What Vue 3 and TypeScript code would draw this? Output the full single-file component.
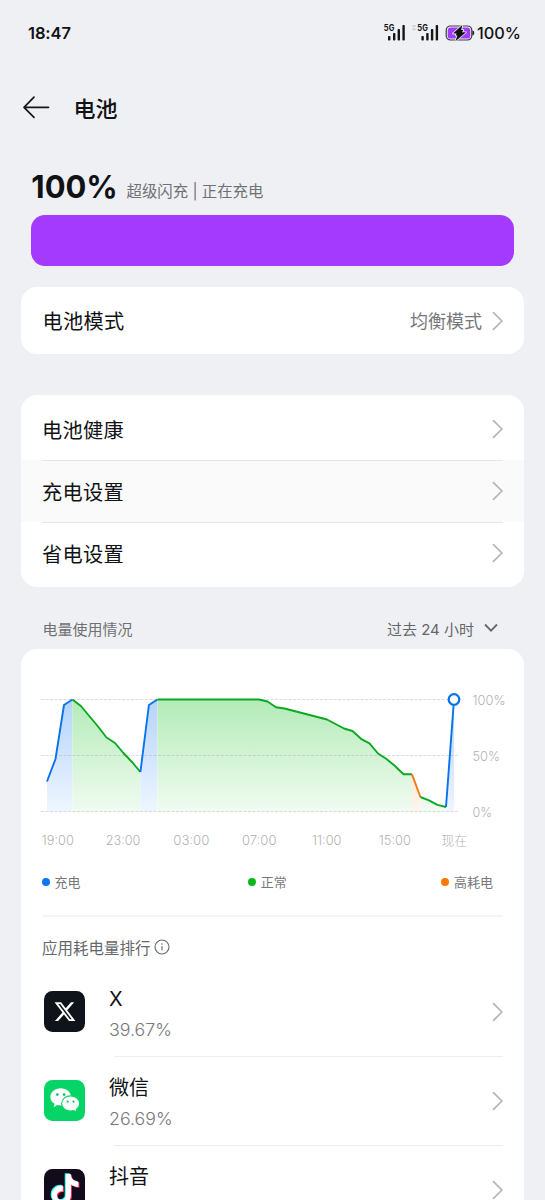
<script setup lang="ts">
type Kind = 'charge' | 'normal' | 'high'
type Point = [number, number]

interface Segment {
  kind: Kind
  points: Point[]
}

const BASE = 811.5

const segments: Segment[] = [
  { kind: 'charge', points: [[47, 781.5], [55.5, 759], [64, 705], [72.4, 699.5]] },
  {
    kind: 'normal',
    points: [[72.4, 699.5], [80.9, 706], [98, 726.5], [106.5, 737.5], [115, 743], [123.4, 753], [132, 762], [140.4, 772]],
  },
  { kind: 'charge', points: [[140.4, 772], [148.9, 705], [157.4, 699.5]] },
  {
    kind: 'normal',
    points: [
      [157.4, 699.5], [259, 699.5], [267.5, 701.5], [276, 707.2], [284.5, 708.5], [327, 719.5], [344, 728.5],
      [352.5, 731], [361, 738.8], [369.5, 743.3], [378, 753.5], [386.5, 759], [395, 766], [403.5, 774.3], [412, 774.3],
    ],
  },
  { kind: 'high', points: [[412, 774.3], [420.4, 797]] },
  { kind: 'normal', points: [[420.4, 797], [429, 800.3], [437.4, 804.8], [446, 807]] },
  { kind: 'charge', points: [[446, 807], [454, 699.5]] },
]

const line = (s: Segment): string => s.points.map((p) => p.join(',')).join(' ')
const area = (s: Segment): string => {
  const first = s.points[0]
  const last = s.points[s.points.length - 1]
  return `${first[0]},${BASE} ${line(s)} ${last[0]},${BASE}`
}

const times = [
  { t: '19:00', x: 41.8, w: 32 },
  { t: '23:00', x: 105.8, w: 34.5 },
  { t: '03:00', x: 173.3, w: 36 },
  { t: '07:00', x: 242, w: 34.5 },
  { t: '11:00', x: 312, w: 29.5 },
  { t: '15:00', x: 378.8, w: 32 },
  { t: '现在', x: 441.5, w: 25.5 },
]

const levels = [
  { t: '100%', y: 699.5, w: 33 },
  { t: '50%', y: 755.5, w: 27.5 },
  { t: '0%', y: 811.5, w: 19.5 },
]

const settings = ['电池健康', '充电设置', '省电设置']

const apps = [
  { id: 'x', name: 'X', share: '39.67%' },
  { id: 'wechat', name: '微信', share: '26.69%' },
  { id: 'douyin', name: '抖音', share: '' },
]

const note =
  'M12.525.02c1.31-.02 2.61-.01 3.91-.02.08 1.53.63 3.09 1.75 4.17 1.12 1.11 2.7 1.62 4.24 1.79v4.03c-1.44-.05-2.89-.35-4.2-.97-.57-.26-1.1-.59-1.62-.93-.01 2.92.01 5.84-.02 8.75-.08 1.4-.54 2.79-1.35 3.94-1.31 1.92-3.58 3.17-5.91 3.21-1.43.08-2.86-.31-4.08-1.03-2.02-1.19-3.44-3.37-3.65-5.71-.02-.5-.03-1-.01-1.49.18-1.9 1.12-3.72 2.58-4.96 1.66-1.44 3.98-2.13 6.15-1.72.02 1.48-.04 2.96-.04 4.44-.99-.32-2.15-.23-3.02.37-.63.41-1.11 1.04-1.36 1.75-.21.51-.15 1.07-.14 1.61.24 1.64 1.82 3.02 3.5 2.87 1.12-.01 2.19-.66 2.77-1.61.19-.33.4-.67.41-1.06.1-1.79.06-3.57.07-5.36.01-4.03-.01-8.05.02-12.07z'
</script>

<template>
  <div class="screen">
    <div class="status">
      <span class="clock">18:47</span>
      <svg class="status-icons" width="92" height="20" viewBox="383 23 92 20">
        <g class="ink">
          <rect x="388" y="36" width="2.4" height="4.5" rx=".8" />
          <rect x="393" y="33" width="2.4" height="7.5" rx=".8" />
          <rect x="397.6" y="29" width="2.4" height="11.5" rx=".8" />
          <rect x="402.4" y="25" width="2.4" height="15.5" rx=".8" />
          <rect x="421.4" y="36" width="2.4" height="4.5" rx=".8" />
          <rect x="426.2" y="33" width="2.4" height="7.5" rx=".8" />
          <rect x="430.9" y="29" width="2.4" height="11.5" rx=".8" />
          <rect x="435.7" y="25" width="2.4" height="15.5" rx=".8" />
        </g>
        <text class="net" x="383.800" y="31.200" textLength="10.500" lengthAdjust="spacingAndGlyphs">5G</text>
        <text class="net" x="417.300" y="31.200" textLength="10.500" lengthAdjust="spacingAndGlyphs">5G</text>
        <rect x="412.300" y="25" width="3.400" height="2" fill="#d2d3d5" />
        <rect x="412.300" y="28.200" width="3.400" height="2" fill="#d2d3d5" />
        <rect x="446.200" y="26" width="25.600" height="14" rx="4.400" fill="#eff0f3" stroke="#3c3c42" stroke-width="1.200" />
        <rect x="447.700" y="27.400" width="22.600" height="11.200" rx="3.200" fill="#a53aff" />
        <path d="M472.400 30.500c1.400.3 1.800 1.200 1.800 2.500s-.4 2.200-1.800 2.500z" fill="#222" />
        <path d="M462.300 25 453 33.600h3.600l-1 1.800h1.800l-2 5.800 10.600-9h-4l1.400-2.200h-2.200z" fill="#111" stroke="#eff0f3" stroke-width="1.600" stroke-linejoin="round" paint-order="stroke" />
      </svg>
      <span class="status-pct">100%</span>
    </div>

    <header class="title-bar">
      <svg width="28" height="24" viewBox="22 95 28 24" fill="none" stroke="#15161a" stroke-width="1.700" stroke-linecap="round" stroke-linejoin="round">
        <path d="M48.500 107.300H24M34 97.200 24 107.300l10 10" />
      </svg>
      <h1>电池</h1>
    </header>

    <div class="charge">
      <svg class="hero" width="90" height="42" viewBox="0 0 90 42">
        <text x=".3" y="31.200" textLength="86.500" lengthAdjust="spacingAndGlyphs">100%</text>
      </svg>
      <span>超级闪充 | 正在充电</span>
    </div>
    <div class="bar"></div>

    <section class="card mode">
      <span class="label">电池模式</span>
      <span class="value">均衡模式</span>
      <svg class="chev" viewBox="0 0 12 20"><path d="M2.500 1.700 10.900 10l-8.400 8.300" /></svg>
    </section>

    <section class="card list">
      <div v-for="(s, i) in settings" :key="s" class="row" :class="{ pressed: i === 1 }">
        <div class="row-in">
          <span class="label">{{ s }}</span>
          <svg class="chev" viewBox="0 0 12 20"><path d="M2.500 1.700 10.900 10l-8.400 8.300" /></svg>
        </div>
      </div>
    </section>

    <div class="section-head">
      <span class="usage">电量使用情况</span>
      <span class="range">过去 24 小时</span>
      <svg width="14" height="10" viewBox="0 0 14 10" fill="none" stroke="#66676a" stroke-width="1.800"><path d="M1 1.500 7 7.700l6-6.200" /></svg>
    </div>

    <section class="card usage-card">
      <svg class="chart" width="503" height="210" viewBox="21 649 503 210">
        <defs>
          <linearGradient id="g-normal" gradientUnits="userSpaceOnUse" x1="0" y1="699" x2="0" y2="812">
            <stop offset="0" stop-color="#b3ebb7" /><stop offset="1" stop-color="#f1fbf2" />
          </linearGradient>
          <linearGradient id="g-charge" gradientUnits="userSpaceOnUse" x1="0" y1="699" x2="0" y2="812">
            <stop offset="0" stop-color="#b4d3fc" /><stop offset="1" stop-color="#eff6ff" />
          </linearGradient>
          <linearGradient id="g-high" gradientUnits="userSpaceOnUse" x1="0" y1="699" x2="0" y2="812">
            <stop offset="0" stop-color="#ffd3b0" /><stop offset="1" stop-color="#fff4ec" />
          </linearGradient>
        </defs>
        <polygon v-for="(s, i) in segments" :key="'a' + i" :class="'fill-' + s.kind" :points="area(s)" />
        <g class="grid">
          <line v-for="l in levels" :key="l.t" x1="41" :y1="l.y" x2="458" :y2="l.y" />
        </g>
        <polyline v-for="(s, i) in segments" :key="'l' + i" class="curve" :class="'line-' + s.kind" :points="line(s)" />
        <circle cx="454" cy="699.500" r="5.300" fill="#fff" stroke="#0a73ec" stroke-width="2.300" />
        <text v-for="l in levels" :key="l.t" class="axis" x="472.500" :y="l.y + 5.3" :textLength="l.w" lengthAdjust="spacingAndGlyphs">{{ l.t }}</text>
        <text v-for="t in times" :key="t.t" class="axis" :x="t.x" y="845.300" :textLength="t.w" lengthAdjust="spacingAndGlyphs">{{ t.t }}</text>
      </svg>

      <div class="legend">
        <span><i class="dot blue"></i>充电</span>
        <span class="mid"><i class="dot green"></i>正常</span>
        <span><i class="dot orange"></i>高耗电</span>
      </div>

      <div class="rank">
        <span>应用耗电量排行</span>
        <svg width="16" height="16" viewBox="0 0 16 16" fill="none" stroke="#66676a" stroke-width="1.100">
          <circle cx="8" cy="8" r="7" />
          <path d="M8 7v4.600M8 4.200v1.500" />
        </svg>
      </div>

      <div v-for="a in apps" :key="a.id" class="app">
        <svg v-if="a.id === 'x'" class="icon" viewBox="0 0 41 41">
          <rect width="41" height="41" rx="8.500" fill="#0e1419" />
          <path transform="translate(9.300 9) scale(.97)" fill="#fff" d="M18.244 2.250h3.308l-7.227 8.260 8.502 11.240H16.170l-5.214-6.817L4.990 21.750H1.680l7.730-8.835L1.254 2.250H8.080l4.713 6.231zm-1.161 17.520h1.833L7.084 4.126H5.117z" />
        </svg>
        <svg v-else-if="a.id === 'wechat'" class="icon" viewBox="0 0 41 41">
          <rect width="41" height="41" rx="8.500" fill="#07d466" />
          <path fill="#fff" d="M16.700 8.200c5.700 0 10.300 3.900 10.300 8.700s-4.600 8.700-10.300 8.700c-1.200 0-2.300-.2-3.400-.5l-3.700 2.100 1-3.400c-2.600-1.600-4.200-4.100-4.200-6.900 0-4.800 4.600-8.700 10.300-8.700z" />
          <path fill="#fff" stroke="#07d466" stroke-width="1.100" d="M26.600 15.900c5 0 9 3.400 9 7.600 0 2.400-1.300 4.500-3.400 5.900l.7 2.900-3.200-1.700c-1 .3-2 .5-3.100.5-5 0-9-3.400-9-7.600s4-7.600 9-7.600z" />
          <g fill="#07c160"><circle cx="13.300" cy="14.600" r="1.300" /><circle cx="20.100" cy="14.600" r="1.300" /><circle cx="23.700" cy="21.600" r="1.100" /><circle cx="29.500" cy="21.600" r="1.100" /></g>
        </svg>
        <svg v-else class="icon" viewBox="0 0 41 41">
          <rect width="41" height="41" rx="8.500" fill="#110b1c" />
          <path :d="note" transform="translate(4.700 4.300) scale(1.280)" fill="#25f4ee" />
          <path :d="note" transform="translate(6.700 5.900) scale(1.280)" fill="#fe2c55" />
          <path :d="note" transform="translate(5.700 5.100) scale(1.280)" fill="#fff" />
        </svg>
        <div class="app-in">
          <div class="app-text">
            <b>{{ a.name }}</b>
            <small>{{ a.share }}</small>
          </div>
          <svg class="chev" viewBox="0 0 12 20"><path d="M2.500 1.700 10.900 10l-8.400 8.300" /></svg>
        </div>
      </div>
    </section>
  </div>
</template>

<style>
body {
  margin: 0;
  background: #eff0f3;
}
</style>

<style scoped>
.screen {
  box-sizing: border-box;
  width: 545px;
  height: 1200px;
  overflow: hidden;
  background: #eff0f3;
  color: #111215;
  font-family: Inter, 'Noto Sans CJK SC', sans-serif;
  display: flex;
  flex-direction: column;
}
.status {
  flex: none;
  height: 66px;
  padding: 0 25px 0 28px;
  display: flex;
  align-items: center;
}
.clock {
  font-size: 16.500px;
  font-weight: 600;
  letter-spacing: -0.100px;
  flex: 1;
}
.status-icons {
  margin-right: 2px;
}
.ink {
  fill: #15161a;
}
.net {
  font-size: 8.500px;
  font-weight: 700;
  fill: #15161a;
}
.status-pct {
  font-size: 16.300px;
  font-weight: 500;
  width: 43px;
  white-space: nowrap;
}
.title-bar {
  flex: none;
  height: 82px;
  padding-left: 22px;
  display: flex;
  align-items: center;
  gap: 23.500px;
}
h1 {
  margin: -1px 0 0;
  font-size: 22px;
  font-weight: 500;
}
.charge {
  flex: none;
  height: 67px;
  padding: 19px 0 0 31px;
  box-sizing: border-box;
  display: flex;
  align-items: flex-start;
  gap: 5.500px;
}
.hero {
  flex: none;
  display: block;
  font-size: 31.500px;
  font-weight: 700;
  fill: #111215;
  overflow: visible;
}
.charge span {
  font-size: 15.400px;
  line-height: 22px;
  margin-top: 14px;
  color: #707174;
  white-space: pre;
}
.bar {
  flex: none;
  height: 51px;
  margin: 0 31px;
  border-radius: 14px;
  background: #a53aff;
}
.card {
  flex: none;
  margin: 0 21px;
  background: #fff;
  border-radius: 16px;
  overflow: hidden;
}
.mode {
  margin-top: 21px;
  height: 67px;
  padding: 0 21px 0 21.500px;
  display: flex;
  align-items: center;
}
.label {
  font-size: 20.200px;
  letter-spacing: 0.350px;
  flex: 1;
}
.value {
  font-size: 18px;
  color: #77787b;
  margin: -1px 9px 0 0;
}
.chev {
  flex: none;
  width: 12px;
  height: 20px;
  fill: none;
  stroke: #b3b4b6;
  stroke-width: 1.700;
  stroke-linecap: round;
}
.list {
  margin-top: 41px;
  height: 192px;
  display: flex;
  flex-direction: column;
}
.row {
  height: 62px;
  padding: 0 21px;
  display: flex;
}
.row:first-child {
  height: 65px;
}
.row:last-child {
  height: 65px;
}
.row-in {
  flex: 1;
  display: flex;
  align-items: center;
  border-top: 1px solid #e6e6e8;
}
.row:first-child .row-in {
  border-top-color: transparent;
  padding-top: 2px;
}
.row:last-child .row-in {
  padding-bottom: 3px;
}
.row + .row .chev {
  margin-top: -1px;
}
.pressed {
  background: #fafafa;
}
.section-head {
  flex: none;
  height: 62px;
  box-sizing: border-box;
  padding: 20px 47px 0 42.500px;
  display: flex;
  align-items: center;
  font-size: 15px;
  color: #66676a;
}
.usage {
  flex: 1;
  color: #707174;
}
.range {
  margin-right: 10px;
}
.usage-card {
  height: 600px;
}
.chart {
  display: block;
}
.grid line {
  stroke: #9a9a9a;
  stroke-opacity: 0.350;
  stroke-width: 1;
  stroke-dasharray: 3 1.500;
}
.curve {
  fill: none;
  stroke-width: 1.900;
  stroke-linejoin: round;
}
.line-charge {
  stroke: #0a73ec;
}
.line-normal {
  stroke: #0ba822;
}
.line-high {
  stroke: #f0780f;
}
.fill-charge {
  fill: url(#g-charge);
}
.fill-normal {
  fill: url(#g-normal);
}
.fill-high {
  fill: url(#g-high);
}
.axis {
  font-size: 13px;
  font-weight: 300;
  fill: #b2b3b5;
}
.legend {
  height: 47px;
  box-sizing: border-box;
  padding: 0 10px 2px 0;
  margin: 0 21px;
  display: flex;
  justify-content: space-between;
  align-items: center;
  font-size: 13px;
  color: #77787b;
}
.legend span {
  display: flex;
  align-items: center;
}
.legend .mid {
  margin-left: 13px;
}
.dot {
  width: 8px;
  height: 8px;
  border-radius: 50%;
  margin-right: 4.500px;
}
.blue {
  background: #0a78f5;
}
.green {
  background: #0cb71c;
}
.orange {
  background: #fa7905;
}
.rank {
  margin: 9px 21px 0;
  height: 62px;
  border-top: 2px solid #f4f4f5;
  display: flex;
  align-items: center;
  gap: 3px;
  font-size: 15.500px;
  color: #66676a;
  box-sizing: border-box;
}
.app {
  height: 89px;
  padding: 0 21px 0 23px;
  display: flex;
  align-items: center;
}
.rank + .app {
  margin-top: -10px;
}
.icon {
  flex: none;
  width: 41px;
  height: 41px;
  margin-right: 24px;
}
.app-in {
  flex: 1;
  height: 91px;
  display: flex;
  align-items: center;
  background: linear-gradient(#ededee, #ededee) 5px 100% / 100% 1px no-repeat;
}
.app-text {
  flex: 1;
  display: flex;
  flex-direction: column;
  padding-top: 5px;
}
.app-text b {
  font-size: 20px;
  font-weight: 400;
  line-height: 31px;
  height: 30px;
}
.app-text small {
  font-size: 17.800px;
  font-weight: 300;
  line-height: 31px;
  height: 30px;
  color: #77787b;
}
</style>
